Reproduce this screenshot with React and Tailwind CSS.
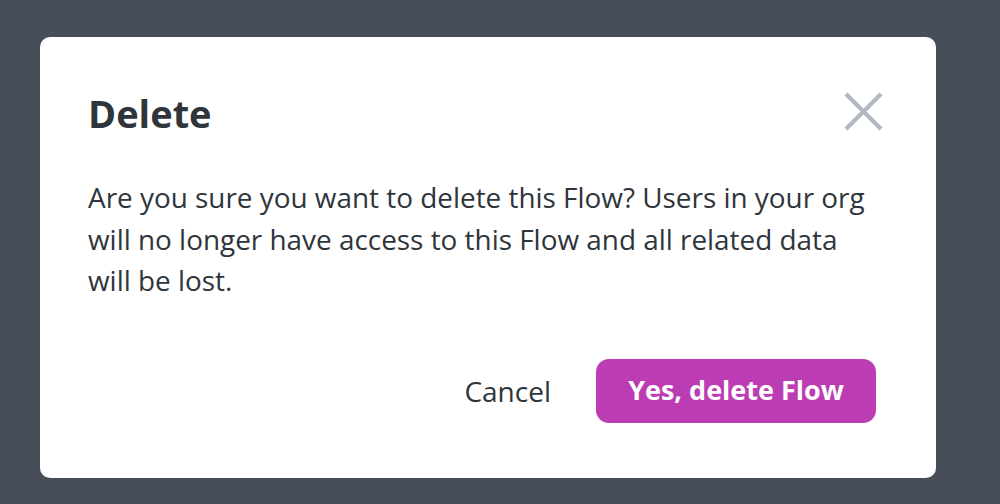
export default function App() {
  return (
    <div className="w-[1000px] h-[504px] bg-[#484e59] pt-[37px] pl-[40px] font-['Open_Sans',sans-serif] overflow-hidden">
      <div className="w-[896px] h-[441px] bg-white rounded-[10px] pl-[48px] pr-[60px] pt-[52px] text-[#2e353b]">
        <div className="flex items-center justify-between h-[48px]">
          <h1 className="text-[38px] font-bold leading-[48px]">Delete</h1>
          <button className="-mr-[7px] -mt-[4px] flex items-center justify-center">
            <svg width="39" height="39" viewBox="0 0 39 39" fill="none" stroke="#b1b8c0" strokeWidth="4.2">
              <path d="M2 2 L37 37 M37 2 L2 37" />
            </svg>
          </button>
        </div>
        <p className="mt-[40px] text-[27.9px] leading-[41.5px] w-[790px]">
          Are you sure you want to delete this Flow? Users in your org will no longer have access to this Flow and all related data will be lost.
        </p>
        <div className="flex items-center justify-end gap-[45px] mt-[57px]">
          <button className="text-[28px] leading-[40px] text-[#2e353b]">Cancel</button>
          <button className="w-[280px] h-[64px] rounded-[13px] bg-[#bb3cb3] text-white text-[27px] font-bold">
            Yes, delete Flow
          </button>
        </div>
      </div>
    </div>
  )
}
